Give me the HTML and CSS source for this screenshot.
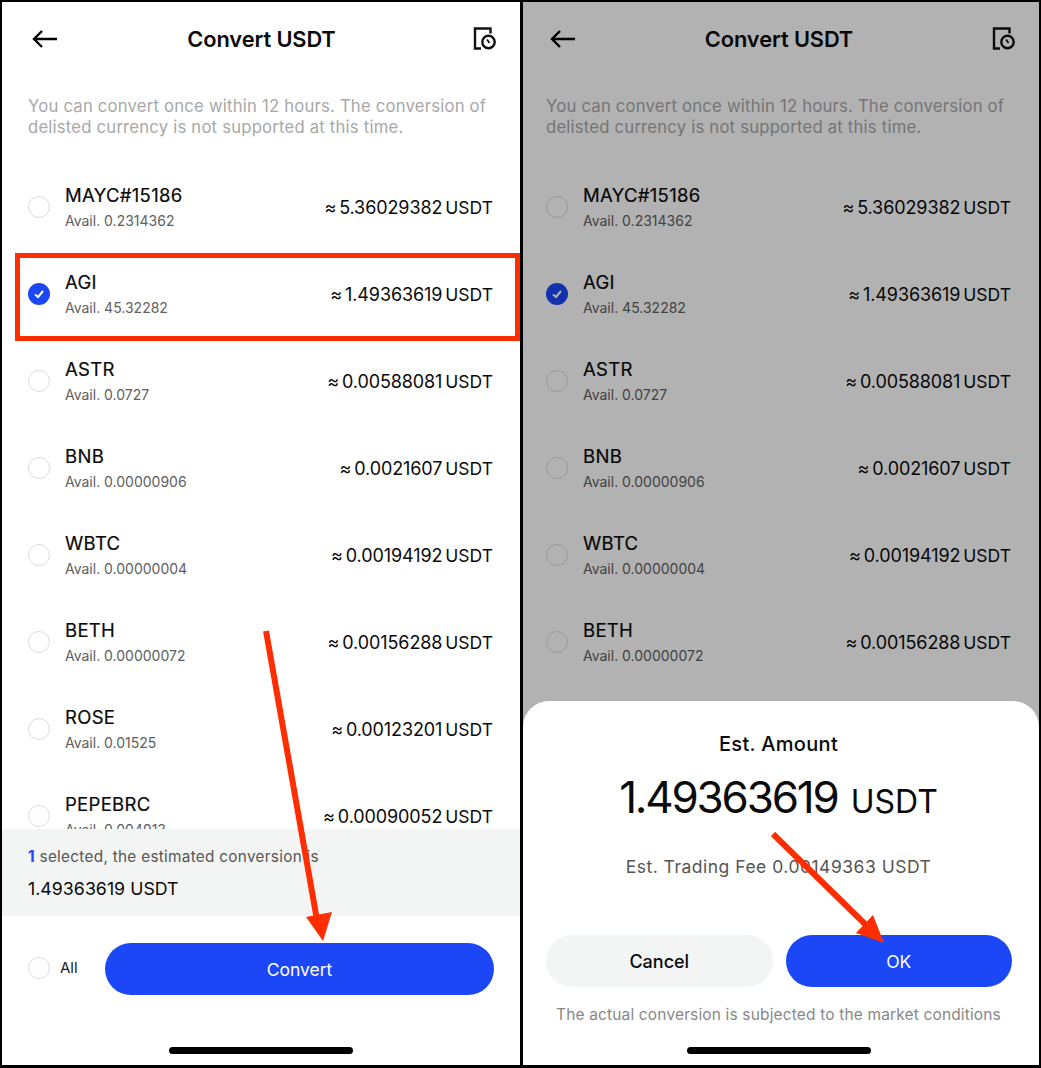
FILE: index.html
```html
<!DOCTYPE html>
<html lang="en">
<head>
<meta charset="utf-8">
<title>Convert USDT</title>
<link rel="stylesheet" href="styles.css">
</head>
<body>
<main class="stage">
  <section class="phone">
    <header class="topbar">
      <svg class="back" viewBox="0 0 26 20"><path d="M25 10H2M10 2 2 10l8 8"/></svg>
      <h1>Convert USDT</h1>
      <svg class="history" viewBox="0 0 24 24"><path d="M8 21.500H2V1.500h15.500v5"/><circle cx="15.500" cy="15" r="6.200"/><path class="hand" d="M14 12.500 16.500 16"/></svg>
    </header>
    <p class="note">You can convert once within 12 hours. The conversion of delisted currency is not supported at this time.</p>
    <div class="list">
      <div class="row"><span class="radio"></span><div class="coin"><b>MAYC#15186</b><small>Avail. 0.2314362</small></div><div class="val">≈ 5.36029382<span>USDT</span></div></div>
      <div class="row"><span class="radio on"><svg viewBox="0 0 22 22"><path d="M7 11.500 10 14l5-6"/></svg></span><div class="coin"><b>AGI</b><small>Avail. 45.32282</small></div><div class="val">≈ 1.49363619<span>USDT</span></div></div>
      <div class="row"><span class="radio"></span><div class="coin"><b>ASTR</b><small>Avail. 0.0727</small></div><div class="val">≈ 0.00588081<span>USDT</span></div></div>
      <div class="row"><span class="radio"></span><div class="coin"><b>BNB</b><small>Avail. 0.00000906</small></div><div class="val">≈ 0.0021607<span>USDT</span></div></div>
      <div class="row"><span class="radio"></span><div class="coin"><b>WBTC</b><small>Avail. 0.00000004</small></div><div class="val">≈ 0.00194192<span>USDT</span></div></div>
      <div class="row"><span class="radio"></span><div class="coin"><b>BETH</b><small>Avail. 0.00000072</small></div><div class="val">≈ 0.00156288<span>USDT</span></div></div>
      <div class="row"><span class="radio"></span><div class="coin"><b>ROSE</b><small>Avail. 0.01525</small></div><div class="val">≈ 0.00123201<span>USDT</span></div></div>
      <div class="row"><span class="radio"></span><div class="coin"><b>PEPEBRC</b><small>Avail. 0.004913</small></div><div class="val">≈ 0.00090052<span>USDT</span></div></div>
    </div>
    <div class="summary">
      <p class="picked"><em>1</em> selected, the estimated conversion is</p>
      <p class="total">1.49363619 USDT</p>
    </div>
    <div class="actions">
      <span class="radio"></span><span class="all">All</span>
      <button class="btn primary wide">Convert</button>
    </div>
    <div class="home"></div>
  </section>

  <section class="phone second">
    <header class="topbar">
      <svg class="back" viewBox="0 0 26 20"><path d="M25 10H2M10 2 2 10l8 8"/></svg>
      <h1>Convert USDT</h1>
      <svg class="history" viewBox="0 0 24 24"><path d="M8 21.500H2V1.500h15.500v5"/><circle cx="15.500" cy="15" r="6.200"/><path class="hand" d="M14 12.500 16.500 16"/></svg>
    </header>
    <p class="note">You can convert once within 12 hours. The conversion of delisted currency is not supported at this time.</p>
    <div class="list">
      <div class="row"><span class="radio"></span><div class="coin"><b>MAYC#15186</b><small>Avail. 0.2314362</small></div><div class="val">≈ 5.36029382<span>USDT</span></div></div>
      <div class="row"><span class="radio on"><svg viewBox="0 0 22 22"><path d="M7 11.500 10 14l5-6"/></svg></span><div class="coin"><b>AGI</b><small>Avail. 45.32282</small></div><div class="val">≈ 1.49363619<span>USDT</span></div></div>
      <div class="row"><span class="radio"></span><div class="coin"><b>ASTR</b><small>Avail. 0.0727</small></div><div class="val">≈ 0.00588081<span>USDT</span></div></div>
      <div class="row"><span class="radio"></span><div class="coin"><b>BNB</b><small>Avail. 0.00000906</small></div><div class="val">≈ 0.0021607<span>USDT</span></div></div>
      <div class="row"><span class="radio"></span><div class="coin"><b>WBTC</b><small>Avail. 0.00000004</small></div><div class="val">≈ 0.00194192<span>USDT</span></div></div>
      <div class="row"><span class="radio"></span><div class="coin"><b>BETH</b><small>Avail. 0.00000072</small></div><div class="val">≈ 0.00156288<span>USDT</span></div></div>
    </div>
    <div class="dim"></div>
    <div class="sheet">
      <h2>Est. Amount</h2>
      <p class="amount">1.49363619 <span>USDT</span></p>
      <p class="fee">Est. Trading Fee 0.00149363 USDT</p>
      <div class="choices">
        <button class="btn plain">Cancel</button>
        <button class="btn primary">OK</button>
      </div>
      <p class="fine">The actual conversion is subjected to the market conditions</p>
      <div class="home"></div>
    </div>
  </section>

  <div class="mark"></div>
  <svg class="arrows" viewBox="0 0 1041 1068">
    <path class="shaft" d="M266 631 317 920"/>
    <path class="tip" d="M306 917 332 912 323 941Z"/>
    <path class="shaft" d="M773 834 866 925"/>
    <path class="tip" d="M856 933 873 915 884 943Z"/>
  </svg>
</main>
</body>
</html>
```

FILE: styles.css
```css
* { box-sizing: border-box; }
html, body { margin: 0; background: #000; }
body { font-family: Inter, "Liberation Sans", sans-serif; color: #0a0a0a; }
p, h1, h2 { margin: 0; }

.stage {
  position: relative;
  width: 1041px;
  height: 1068px;
  display: flex;
  gap: 3px;
  padding: 2px 2px 3px;
}
.phone {
  --left: 26px;
  --right: 27px;
  --back: 6px;
  position: relative;
  flex: none;
  width: 518px;
  display: flex;
  flex-direction: column;
  background: #fff;
  overflow: hidden;
}
.second {
  --left: 23px;
  --right: 28px;
  --back: 3px;
  width: 516px;
}
.second h1 { margin-right: 5px; }

.topbar {
  flex: none;
  height: 74px;
  padding: 0 23px 0 24px;
  display: grid;
  grid-template-columns: 1fr auto 1fr;
  align-items: center;
}
.topbar h1 { font-size: 21.800px; font-weight: 600; letter-spacing: -0.1px; }
.back { width: 26px; height: 20px; margin-left: var(--back); fill: none; stroke: #000; stroke-width: 2.4; }
.history { justify-self: end; width: 24px; height: 24px; fill: none; stroke: #111; stroke-width: 2.4; }
.history .hand { stroke-width: 1.800; }

.note {
  flex: none;
  height: 87px;
  padding: 20px var(--right) 0 var(--left);
  font-size: 16.700px;
  line-height: 21px;
  letter-spacing: 0.2px;
  color: #a8a8a8;
}

.list { flex: 1; min-height: 0; overflow: hidden; }
.row {
  height: 87px;
  padding: 0 var(--right) 0 var(--left);
  display: flex;
  align-items: center;
}
.radio {
  flex: none;
  width: 22px;
  height: 22px;
  border: 1.500px solid #dcdcdc;
  border-radius: 50%;
  background: #fff;
}
.radio.on { border: 0; background: #1c47f6; }
.radio svg { display: block; fill: none; stroke: #fff; stroke-width: 2; }
.coin { margin-left: 15px; margin-top: 2px; flex: 1; display: flex; flex-direction: column; gap: 6px; }
.coin b { font-size: 18.500px; line-height: 21px; font-weight: 400; letter-spacing: 0.3px; -webkit-text-stroke: 0.2px #0a0a0a; }
.coin small { font-size: 14px; line-height: 18px; color: #606060; }
.val { margin-top: 2px; font-size: 18px; letter-spacing: -0.1px; word-spacing: -2px; display: flex; align-items: baseline; gap: 3px; }
.val span { font-size: 17.500px; letter-spacing: 0; }

.summary {
  flex: none;
  height: 87px;
  padding: 18px var(--right) 0 var(--left);
  background: #f3f5f4;
}
.picked { font-size: 15.300px; line-height: 20px; letter-spacing: 0.3px; color: #555; }
.picked em { font-style: normal; font-weight: 700; color: #1c47f6; }
.total { margin-top: 11px; font-size: 17.800px; line-height: 22px; }

.actions {
  flex: none;
  height: 131px;
  padding: 27px 26px 0 var(--left);
  display: flex;
  align-items: flex-start;
}
.actions .radio { margin-top: 14px; }
.all { margin: 15px 0 0 10px; width: 45px; font-size: 15px; line-height: 20px; color: #222; }

.btn {
  flex: 1;
  height: 52px;
  border: 0;
  border-radius: 26px;
  font: 400 17.500px Inter, "Liberation Sans", sans-serif;
}
.primary { background: #1c47f6; color: #fff; }
.plain { background: #f3f5f4; color: #0a0a0a; font-weight: 500; font-size: 18px; }

.home {
  flex: none;
  width: 184px;
  height: 7px;
  margin: 0 auto 11px;
  border-radius: 4px;
  background: #000;
}

.dim { position: absolute; inset: 0; background: rgba(0, 0, 0, .3); }
.sheet {
  position: absolute;
  left: 0;
  right: 0;
  bottom: 0;
  height: 364px;
  padding: 31px 5px 0 0;
  border-radius: 26px 26px 0 0;
  background: #fff;
  text-align: center;
}
.sheet h2 { font-size: 20px; line-height: 24px; font-weight: 500; letter-spacing: 0.3px; }
.amount { margin-top: 16px; font-size: 44px; line-height: 50px; letter-spacing: -2.200px; }
.amount span { margin-left: 3px; font-size: 32px; line-height: 1; letter-spacing: 0; }
.fee { margin-top: 34px; font-size: 17.500px; line-height: 22px; letter-spacing: 0.5px; color: #555; }
.choices { margin-top: 57px; padding: 0 22px 0 23px; display: flex; gap: 13px; }
.fine { margin-top: 18px; font-size: 15.500px; line-height: 20px; letter-spacing: 0.15px; color: #888; }
.sheet .home { margin-top: 22px; }

.mark {
  position: absolute;
  left: 15px;
  top: 253px;
  width: 505px;
  height: 88px;
  border: 5px solid #ff2d00;
}
.arrows { position: absolute; inset: 0; width: 1041px; height: 1068px; pointer-events: none; }
.shaft { fill: none; stroke: #ff2d00; stroke-width: 6; }
.tip { fill: #ff2d00; }
```
